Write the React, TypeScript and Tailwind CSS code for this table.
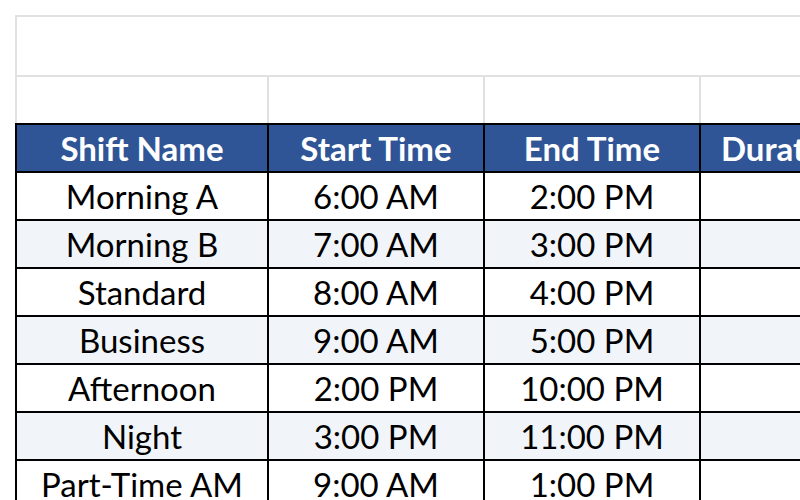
import React from 'react';

const columns = [
  { key: 'name', label: 'Shift Name', width: 'w-[252px]', head: 'justify-center' },
  { key: 'start', label: 'Start Time', width: 'w-[216px]', head: 'justify-center' },
  { key: 'end', label: 'End Time', width: 'w-[216px]', head: 'justify-center' },
  { key: 'duration', label: 'Duration', width: 'w-[216px]', head: 'justify-start pl-[20px]' },
];

const shifts = [
  { name: 'Morning A', start: '6:00 AM', end: '2:00 PM', duration: '' },
  { name: 'Morning B', start: '7:00 AM', end: '3:00 PM', duration: '' },
  { name: 'Standard', start: '8:00 AM', end: '4:00 PM', duration: '' },
  { name: 'Business', start: '9:00 AM', end: '5:00 PM', duration: '' },
  { name: 'Afternoon', start: '2:00 PM', end: '10:00 PM', duration: '' },
  { name: 'Night', start: '3:00 PM', end: '11:00 PM', duration: '' },
  { name: 'Part-Time AM', start: '9:00 AM', end: '1:00 PM', duration: '' },
];

export default function App() {
  return (
    <div
      className="w-[800px] h-[500px] overflow-hidden bg-white pl-[15px] pt-[15px] text-[33px] leading-none text-black"
      style={{ fontFamily: 'Lato, "Open Sans", sans-serif' }}
    >
      <div className="w-[1000px]">
        {/* Title row (merged) */}
        <div className="h-[60px] border-t-2 border-l-2 border-[#e1e1e1]" />

        {/* Empty row */}
        <div className="flex h-[48px] border-t-2 border-[#e1e1e1]">
          {columns.map((col) => (
            <div key={col.key} className={`${col.width} shrink-0 border-l-2 border-[#e1e1e1]`} />
          ))}
        </div>

        {/* Header */}
        <div className="flex h-[48px] border-t-2 border-black bg-[#2f5597]">
          {columns.map((col) => (
            <div
              key={col.key}
              className={`${col.width} ${col.head} shrink-0 border-l-2 border-black flex items-center whitespace-nowrap overflow-hidden font-bold text-white`}
            >
              {col.label}
            </div>
          ))}
        </div>

        {/* Data rows */}
        {shifts.map((s, i) => (
          <div
            key={s.name}
            className={`flex h-[48px] border-t-2 border-black ${i % 2 === 1 ? 'bg-[#f1f5fa]' : 'bg-white'}`}
          >
            {columns.map((col) => (
              <div
                key={col.key}
                className={`${col.width} shrink-0 border-l-2 border-black flex items-center justify-center whitespace-nowrap`}
              >
                {s[col.key as keyof typeof s]}
              </div>
            ))}
          </div>
        ))}
      </div>
    </div>
  );
}
